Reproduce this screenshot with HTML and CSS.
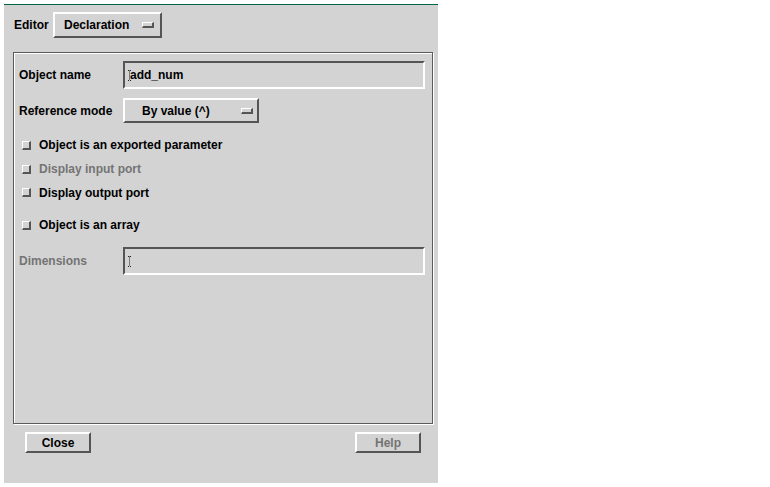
FILE: index.html
```html
<!DOCTYPE html>
<html lang="en">
<head>
    <meta charset="UTF-8">
    <title>Declaration Editor</title>
    <link rel="stylesheet" href="styles.css">
</head>
<body>
    <div class="dialog">
        <div class="top-bar">
            <span class="label">Editor</span>
            <div class="option-menu editor-menu">
                <span>Declaration</span>
                <span class="indicator"></span>
            </div>
        </div>

        <div class="frame">
            <div class="form-row name-row">
                <span class="row-label">Object name</span>
                <div class="text-field">
                    <svg class="ibeam" width="3" height="11" viewBox="0 0 3 11"><path d="M0 0.5h3M1.5 0.5v10M0 10.5h3" stroke="#222" stroke-width="1" stroke-dasharray="1 1" fill="none"/></svg>
                    <span class="field-text">add_num</span>
                </div>
            </div>

            <div class="form-row ref-row">
                <span class="row-label">Reference mode</span>
                <div class="option-menu ref-menu">
                    <span>By value (^)</span>
                    <span class="indicator"></span>
                </div>
            </div>

            <div class="check-row first">
                <span class="checkbox"></span>
                <span>Object is an exported parameter</span>
            </div>
            <div class="check-row disabled">
                <span class="checkbox"></span>
                <span>Display input port</span>
            </div>
            <div class="check-row short">
                <span class="checkbox"></span>
                <span>Display output port</span>
            </div>
            <div class="check-row array-row">
                <span class="checkbox"></span>
                <span>Object is an array</span>
            </div>

            <div class="form-row dim-row">
                <span class="row-label disabled">Dimensions</span>
                <div class="text-field">
                    <svg class="ibeam" width="3" height="11" viewBox="0 0 3 11"><path d="M0 0.5h3M1.5 0.5v10M0 10.5h3" stroke="#222" stroke-width="1" stroke-dasharray="1 1" fill="none"/></svg>
                </div>
            </div>
        </div>

        <div class="button-bar">
            <div class="push-button">Close</div>
            <div class="push-button disabled">Help</div>
        </div>
    </div>
</body>
</html>
```

FILE: styles.css
```css
body {
    margin: 0;
    background-color: #ffffff;
    font-family: "Liberation Sans", Arial, sans-serif;
    font-size: 12px;
    font-weight: bold;
    color: #000000;
}
.dialog {
    width: 434px;
    height: 479px;
    margin: 4px 0 0 4px;
    box-sizing: border-box;
    border-top: 1px solid #00664a;
    background-color: #d3d3d3;
    display: flex;
    flex-direction: column;
}
.disabled { color: #747474; }

/* raised / sunken motif style borders */
.option-menu, .push-button {
    box-sizing: border-box;
    border: 2px solid;
    border-color: #ffffff #555555 #555555 #ffffff;
}
.top-bar {
    display: flex;
    align-items: center;
    padding: 7px 0 0 10px;
}
.top-bar .label { width: 39px; }
.option-menu {
    display: flex;
    align-items: center;
    height: 26px;
}
.editor-menu {
    width: 109px;
    padding-left: 9px;
}
.editor-menu span:first-child { flex: 1; }
.indicator {
    width: 12px;
    height: 6px;
    box-sizing: border-box;
    border: 1px solid;
    border-color: #ffffff #555555 #555555 #ffffff;
    border-width: 1px 2px 2px 1px;
    margin-right: 6px;
}

.frame {
    width: 420px;
    height: 372px;
    margin: 14px 0 0 9px;
    box-sizing: border-box;
    border: 1px solid #5a5a5a;
    box-shadow: inset 1px 1px 0 #ffffff, 1px 1px 0 #ffffff;
    padding: 8px 0 0 5px;
}
.form-row {
    display: flex;
    align-items: center;
}
.row-label { width: 104px; }
.text-field {
    width: 302px;
    height: 28px;
    box-sizing: border-box;
    border: 2px solid;
    border-color: #555555 #ffffff #ffffff #555555;
    display: flex;
    align-items: center;
    padding-left: 3px;
}
.ibeam { margin-top: 1px; }
.field-text { margin-left: -1px; }
.ref-row { margin-top: 9px; }
.ref-menu {
    width: 136px;
    height: 25px;
    padding-left: 17px;
}
.ref-menu span:first-child { flex: 1; }
.ref-menu .indicator { margin-right: 4px; }

.check-row {
    display: flex;
    align-items: center;
    gap: 8px;
    height: 24px;
    padding-left: 3px;
}
.check-row.first { margin-top: 10px; }
.check-row.short { height: 23px; }
.check-row.array-row { margin-top: 9px; }
.checkbox {
    width: 9px;
    height: 9px;
    box-sizing: border-box;
    border-style: solid;
    border-width: 1px 2px 2px 1px;
    border-color: #ffffff #555555 #555555 #ffffff;
}
.dim-row { margin-top: 10px; }

.button-bar {
    display: flex;
    justify-content: space-between;
    padding: 8px 17px 0 21px;
}
.push-button {
    width: 66px;
    height: 21px;
    display: flex;
    align-items: center;
    justify-content: center;
}
```
